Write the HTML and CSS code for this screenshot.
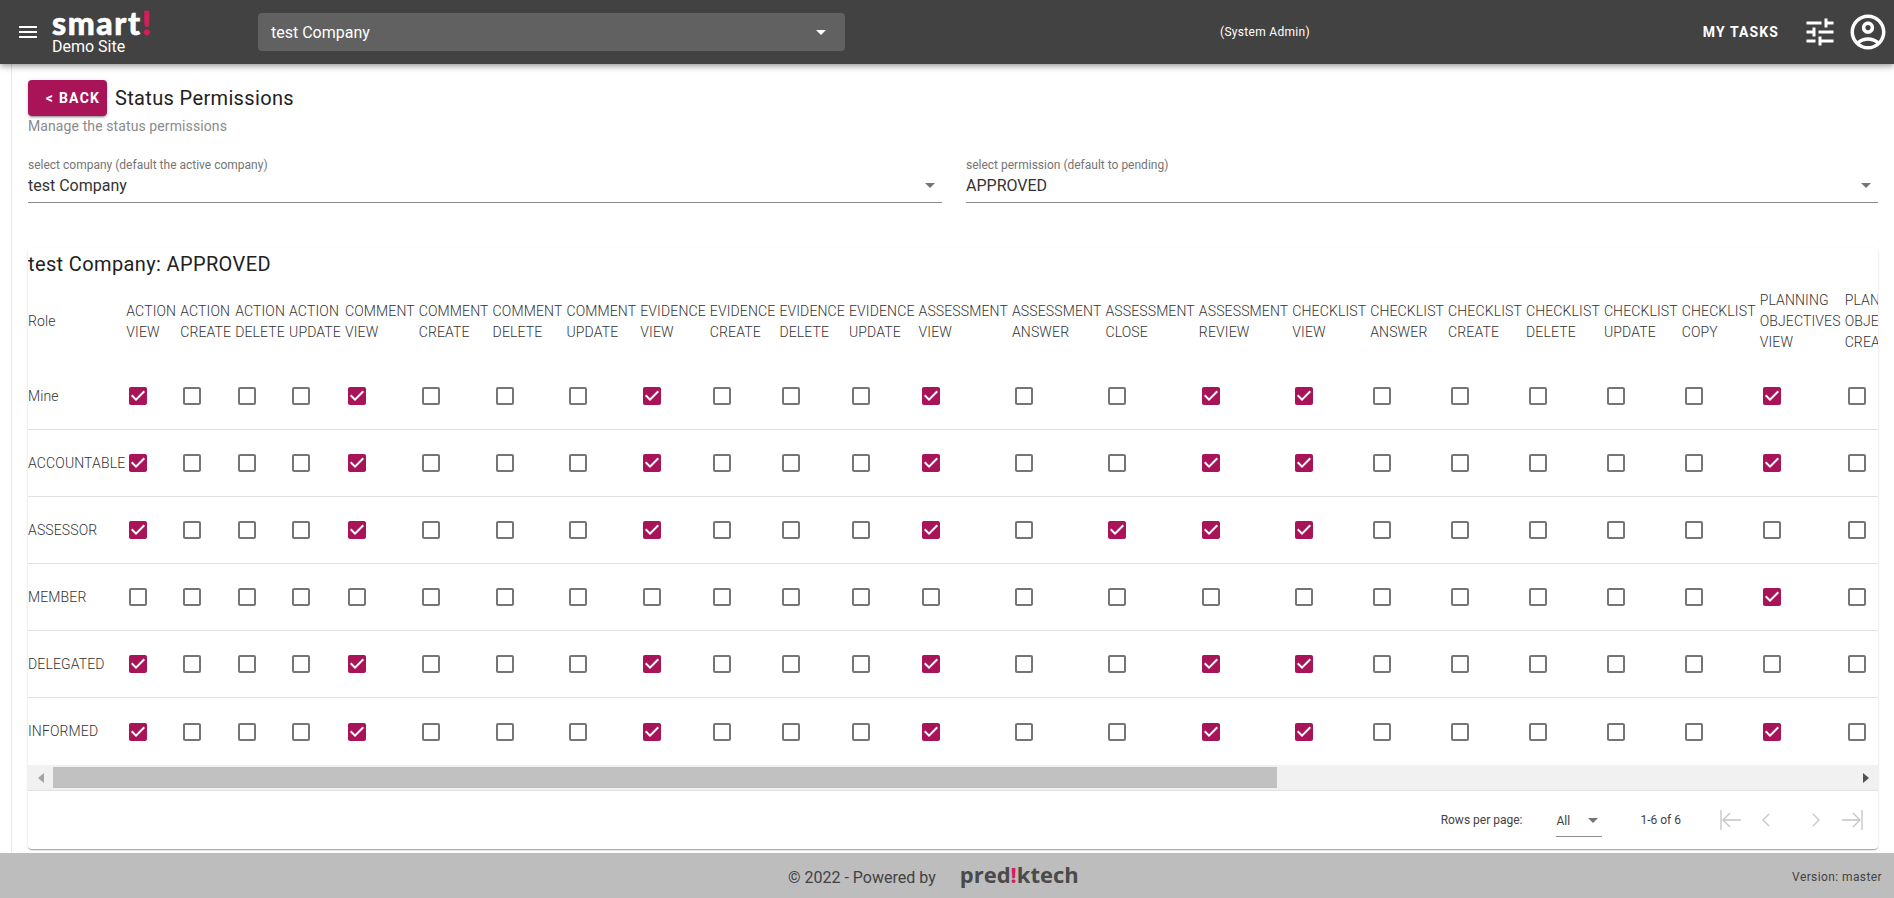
FILE: index.html
```html
<!DOCTYPE html>
<html lang="en">
<head>
    <meta charset="UTF-8">
    <meta name="viewport" content="width=device-width, initial-scale=1.0">
    <title>Status Permissions</title>
    <link rel="stylesheet" href="styles.css">
</head>
<body>
    <header class="topbar">
        <svg class="menu-icon" viewBox="0 0 24 24"><path d="M3 18h18v-2H3v2zm0-5h18v-2H3v2zm0-7v2h18V6H3z"/></svg>
        <div class="brand">
            <div class="logo">smart<span class="logo-mark">!</span></div>
            <div class="site-name">Demo Site</div>
        </div>
        <div class="company-select">
            <span>test Company</span>
            <span class="caret caret-white"></span>
        </div>
        <div class="user-role">(System Admin)</div>
        <div class="my-tasks">MY TASKS</div>
        <svg class="tune-icon" viewBox="0 0 24 24"><path d="M3 17v2h6v-2H3zM3 5v2h10V5H3zm10 16v-2h8v-2h-8v-2h-2v6h2zM7 9v2H3v2h4v2h2V9H7zm14 4v-2H11v2h10zm-6-4h2V7h4V5h-4V3h-2v6z"/></svg>
        <svg class="account-icon" viewBox="0 0 24 24"><path d="M12 2C6.48 2 2 6.48 2 12s4.48 10 10 10 10-4.48 10-10S17.52 2 12 2zM7.35 18.5C8.66 17.56 10.26 17 12 17s3.34.56 4.65 1.5c-1.31.94-2.91 1.5-4.65 1.5s-3.34-.56-4.65-1.5zm10.79-1.38C16.45 15.8 14.32 15 12 15s-4.45.8-6.14 2.12C4.7 15.73 4 13.95 4 12c0-4.42 3.58-8 8-8s8 3.58 8 8c0 1.95-.7 3.73-1.86 5.12z"/><path d="M12 6c-1.93 0-3.5 1.57-3.5 3.5S10.07 13 12 13s3.5-1.57 3.5-3.5S13.93 6 12 6zm0 5c-.83 0-1.5-.67-1.5-1.5S11.17 8 12 8s1.5.67 1.5 1.5S12.83 11 12 11z"/></svg>
    </header>

    <main class="content">
        <div class="title-row">
            <button class="back-btn">&lt; BACK</button>
            <h1 class="page-title">Status Permissions</h1>
        </div>
        <p class="page-sub">Manage the status permissions</p>

        <div class="filters">
            <div class="field">
                <label>select company (default the active company)</label>
                <div class="field-value"><span>test Company</span><span class="caret"></span></div>
            </div>
            <div class="field">
                <label>select permission (default to pending)</label>
                <div class="field-value"><span>APPROVED</span><span class="caret"></span></div>
            </div>
        </div>

        <section class="card">
            <h2 class="card-title">test Company: APPROVED</h2>
            <div class="table-wrap">
                <table class="perm-table">
                    <thead><tr id="head-row"></tr></thead>
                    <tbody id="body-rows"></tbody>
                </table>
            </div>
            <div class="scrollbar">
                <span class="scroll-btn"><span class="arrow-left"></span></span>
                <div class="scroll-track"><div class="scroll-thumb"></div></div>
                <span class="scroll-btn"><span class="arrow-right"></span></span>
            </div>
            <div class="pager">
                <span class="rows-label">Rows per page:</span>
                <div class="rows-select"><span>All</span><span class="caret"></span></div>
                <span class="rows-count">1-6 of 6</span>
                <svg class="pager-icon first" viewBox="0 0 22 20"><path d="M1 0v20M21 10H3M10 3l-7 7 7 7"/></svg>
                <svg class="pager-icon prev" viewBox="0 0 8 14"><path d="M7 1L1 7l6 6"/></svg>
                <svg class="pager-icon next" viewBox="0 0 8 14"><path d="M1 1l6 6-6 6"/></svg>
                <svg class="pager-icon last" viewBox="0 0 22 20"><path d="M21 0v20M1 10h18M12 3l7 7-7 7"/></svg>
            </div>
        </section>
    </main>

    <footer class="footer">
        <span class="powered">© 2022 - Powered by</span>
        <span class="footer-logo">pred<span class="logo-mark">!</span>ktech</span>
        <span class="version">Version: master</span>
    </footer>

    <script src="script.js"></script>
</body>
</html>
```

FILE: styles.css
```css
* {
    box-sizing: border-box;
}
body {
    font-family: Roboto, Arial, sans-serif;
    margin: 0;
    height: 100vh;
    display: flex;
    flex-direction: column;
    overflow: hidden;
    background-color: #fff;
    color: #212121;
}

/* top bar */
.topbar {
    height: 64px;
    flex: none;
    display: flex;
    align-items: center;
    background-color: #424242;
    color: #fff;
    box-shadow: 0 2px 4px -1px rgba(0,0,0,.2), 0 4px 5px rgba(0,0,0,.14), 0 1px 10px rgba(0,0,0,.12);
    position: relative;
}
.menu-icon {
    width: 24px;
    height: 24px;
    margin-left: 16px;
    fill: #fff;
}
.brand {
    margin-left: 12px;
    width: 206px;
}
.logo {
    font-family: Lato, sans-serif;
    font-weight: 900;
    font-size: 32px;
    line-height: 27px;
    letter-spacing: 1.6px;
    margin-top: 2px;
    -webkit-text-stroke: .6px currentColor;
}
.logo-mark {
    color: #d81b60;
}
.site-name {
    font-size: 16px;
    line-height: 20px;
    margin-top: 1px;
}
.company-select {
    width: 587px;
    height: 38px;
    display: flex;
    align-items: center;
    justify-content: space-between;
    padding: 0 19px 0 13px;
    background-color: #616161;
    border-radius: 4px;
    font-size: 16px;
}
.user-role {
    margin-left: 375px;
    font-size: 12px;
    letter-spacing: .3px;
}
.my-tasks {
    margin-left: auto;
    font-size: 14px;
    font-weight: 700;
    letter-spacing: 1.1px;
}
.tune-icon {
    width: 36px;
    height: 36px;
    margin-left: 23px;
    fill: #fff;
}
.account-icon {
    width: 42px;
    height: 42px;
    margin-left: 9px;
    margin-right: 5px;
    fill: #fff;
}
.caret {
    width: 0;
    height: 0;
    border-left: 5px solid transparent;
    border-right: 5px solid transparent;
    border-top: 5px solid #757575;
}
.caret-white {
    border-top-color: #fff;
}

/* page */
.content {
    flex: 1;
    min-height: 0;
    margin-left: 11px;
    padding: 16px 16px 4px 16px;
    border-left: 1px solid #e8e8e8;
    display: flex;
    flex-direction: column;
}
.title-row {
    display: flex;
    align-items: center;
    gap: 8px;
}
.back-btn {
    width: 79px;
    height: 36px;
    padding: 0 0 0 11px;
    border: none;
    border-radius: 4px;
    background-color: #a81457;
    color: #fff;
    font-family: inherit;
    font-size: 14px;
    font-weight: 700;
    letter-spacing: 1.25px;
    white-space: nowrap;
    box-shadow: 0 3px 1px -2px rgba(0,0,0,.2), 0 2px 2px rgba(0,0,0,.14), 0 1px 5px rgba(0,0,0,.12);
}
.page-title {
    margin: 0;
    font-size: 20px;
    font-weight: 400;
    letter-spacing: .35px;
}
.page-sub {
    margin: 0;
    font-size: 14px;
    line-height: 20px;
    color: #8a8a8a;
    letter-spacing: .1px;
}
.filters {
    display: grid;
    grid-template-columns: 914px 1fr;
    gap: 24px;
    margin-top: 21px;
}
.field label {
    display: block;
    font-size: 12px;
    line-height: 16px;
    color: #757575;
}
.field-value {
    display: flex;
    align-items: center;
    justify-content: space-between;
    height: 30px;
    padding: 0 7px 5px 0;
    font-size: 16px;
    color: #333;
    border-bottom: 1px solid #8c8c8c;
}

/* card + table */
.card {
    margin-top: 45px;
    height: 601px;
    flex: none;
    border-radius: 4px;
    background-color: #fff;
    overflow: hidden;
    box-shadow: 0 2px 1px -1px rgba(0,0,0,.2), 0 1px 1px rgba(0,0,0,.14), 0 1px 3px rgba(0,0,0,.12);
}
.card-title {
    margin: 0;
    height: 38px;
    line-height: 32px;
    font-size: 20px;
    font-weight: 400;
    letter-spacing: .37px;
}
.table-wrap {
    overflow: hidden;
}
.perm-table {
    border-collapse: separate;
    border-spacing: 0;
    font-size: 14px;
    font-weight: 300;
    line-height: 21px;
    letter-spacing: .135px;
}
.perm-table th {
    height: 77px;
    padding: 0 4px 6px 0;
    font-weight: 300;
    text-align: left;
    white-space: nowrap;
    color: #333;
}
.perm-table td {
    height: 67px;
    padding: 0 4px 0 0;
    border-bottom: 1px solid #e0e0e0;
    color: #333;
}
.perm-table tr:last-child td {
    border-bottom: none;
}
.perm-table th:first-child,
.perm-table td:first-child {
    padding-right: 1px;
}
.check {
    display: block;
    width: 24px;
    height: 24px;
    fill: rgba(0,0,0,.54);
}
.check-on {
    fill: #a81457;
}

/* drawn scrollbar under the table */
.scrollbar {
    display: flex;
    height: 26px;
    background-color: #f1f1f1;
    border-bottom: 1px solid #e0e0e0;
}
.scroll-btn {
    width: 25px;
    flex: none;
    display: flex;
    align-items: center;
    justify-content: center;
}
.arrow-left {
    border-top: 5px solid transparent;
    border-bottom: 5px solid transparent;
    border-right: 6px solid #a3a3a3;
}
.arrow-right {
    border-top: 5px solid transparent;
    border-bottom: 5px solid transparent;
    border-left: 6px solid #505050;
}
.scroll-track {
    flex: 1;
    padding: 2px 0;
}
.scroll-thumb {
    width: 1224px;
    height: 21px;
    background-color: #c1c1c1;
}

/* pager */
.pager {
    display: flex;
    align-items: center;
    height: 58px;
    font-size: 12px;
    color: #424242;
}
.rows-label {
    margin-left: auto;
}
.rows-select {
    display: flex;
    align-items: center;
    justify-content: space-between;
    width: 46px;
    height: 32px;
    margin-left: 34px;
    padding: 0 4px 0 0;
    border-bottom: 1px solid #8c8c8c;
    margin-top: 2px;
}
.rows-count {
    margin-left: 38px;
}
.pager-icon {
    fill: none;
    stroke: #c4c4c4;
    stroke-width: 1.3;
}
.first {
    width: 22px;
    height: 20px;
    margin-left: 39px;
}
.prev {
    width: 8px;
    height: 14px;
    margin-left: 20px;
}
.next {
    width: 8px;
    height: 14px;
    margin-left: 42px;
}
.last {
    width: 22px;
    height: 20px;
    margin-left: 21px;
    margin-right: 15px;
}

/* footer */
.footer {
    height: 45px;
    flex: none;
    display: flex;
    align-items: center;
    padding: 0 12px 0 788px;
    background-color: #bdbdbd;
    color: #424242;
}
.powered {
    font-size: 16px;
    margin-top: 3px;
}
.footer-logo {
    margin-left: 24px;
    margin-top: -4px;
    font-family: "Open Sans", sans-serif;
    font-weight: 700;
    font-size: 22px;
    color: #4a4a4a;
}
.version {
    margin-left: auto;
    font-size: 12px;
    letter-spacing: .4px;
    margin-top: 3px;
}
```

FILE: script.js
```js
const columns = [
    ['ACTION', 'VIEW'], ['ACTION', 'CREATE'], ['ACTION', 'DELETE'], ['ACTION', 'UPDATE'],
    ['COMMENT', 'VIEW'], ['COMMENT', 'CREATE'], ['COMMENT', 'DELETE'], ['COMMENT', 'UPDATE'],
    ['EVIDENCE', 'VIEW'], ['EVIDENCE', 'CREATE'], ['EVIDENCE', 'DELETE'], ['EVIDENCE', 'UPDATE'],
    ['ASSESSMENT', 'VIEW'], ['ASSESSMENT', 'ANSWER'], ['ASSESSMENT', 'CLOSE'], ['ASSESSMENT', 'REVIEW'],
    ['CHECKLIST', 'VIEW'], ['CHECKLIST', 'ANSWER'], ['CHECKLIST', 'CREATE'], ['CHECKLIST', 'DELETE'],
    ['CHECKLIST', 'UPDATE'], ['CHECKLIST', 'COPY'],
    ['PLANNING', 'OBJECTIVES', 'VIEW'], ['PLANNING', 'OBJECTIVES', 'CREATE']
];

// role name + indexes of the ticked columns
const roles = [
    ['Mine', [0, 4, 8, 12, 15, 16, 22]],
    ['ACCOUNTABLE', [0, 4, 8, 12, 15, 16, 22]],
    ['ASSESSOR', [0, 4, 8, 12, 14, 15, 16]],
    ['MEMBER', [22]],
    ['DELEGATED', [0, 4, 8, 12, 15, 16]],
    ['INFORMED', [0, 4, 8, 12, 15, 16, 22]]
];

const checkedPath = 'M19 3H5c-1.11 0-2 .9-2 2v14c0 1.1.89 2 2 2h14c1.11 0 2-.9 2-2V5c0-1.1-.89-2-2-2zm-9 14l-5-5 1.41-1.41L10 14.17l7.59-7.59L19 8l-9 9z';
const blankPath = 'M19 5v14H5V5h14m0-2H5c-1.1 0-2 .9-2 2v14c0 1.1.9 2 2 2h14c1.1 0 2-.9 2-2V5c0-1.1-.9-2-2-2z';

function checkbox(on) {
    return `<svg class="check ${on ? 'check-on' : ''}" viewBox="0 0 24 24"><path d="${on ? checkedPath : blankPath}"/></svg>`;
}

document.getElementById('head-row').innerHTML = '<th>Role</th>' +
    columns.map(words => `<th>${words.join('<br>')}</th>`).join('');

document.getElementById('body-rows').innerHTML = roles.map(([name, ticked]) => {
    const cells = columns.map((_, i) => `<td>${checkbox(ticked.includes(i))}</td>`).join('');
    return `<tr><td>${name}</td>${cells}</tr>`;
}).join('');
```
